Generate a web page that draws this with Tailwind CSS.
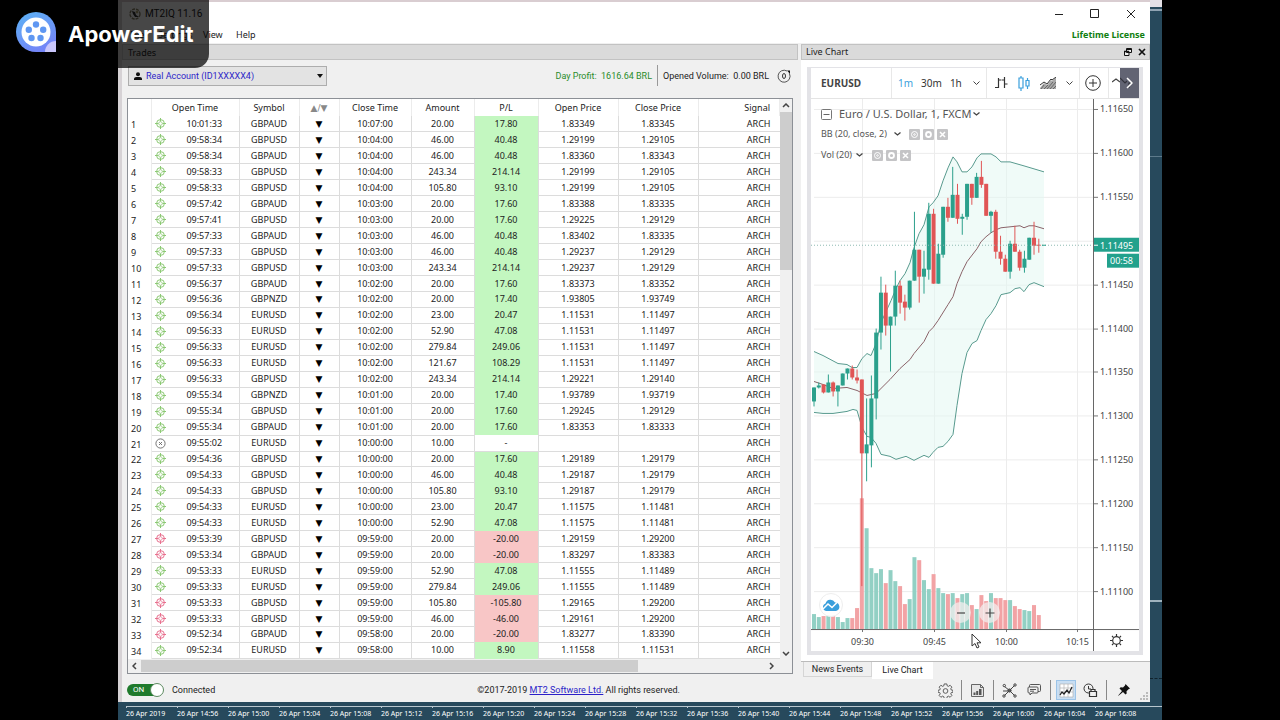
<!DOCTYPE html>
<html lang="en">
<head>
<meta charset="utf-8">
<title>MT2IQ 11.16</title>
<script src="https://cdn.jsdelivr.net/npm/@tailwindcss/browser@4"></script>
</head>
<body class="bg-black font-['Noto_Sans',sans-serif] text-[9px] leading-[12px] text-[#222]">
<div class="relative flex h-screen min-h-[720px] flex-col overflow-hidden px-[118px]">
 <div class="relative flex min-h-0 flex-1 flex-col bg-[#27495c]">

  <!-- desktop behind the window -->
  <div class="absolute top-0 right-0 flex h-full w-3 flex-col">
   <div class="h-[7px] bg-[#e4e0e6]"></div>
   <div class="mt-[2px] h-[2px] bg-[#8fa3b2]"></div>
   <div class="mt-[145px] h-px bg-[#5d7a8b]"></div>
   <div class="mt-[443px] h-[2px] bg-[#9fb3be]"></div>
   <div class="mt-[76px] border-t border-dashed border-[#10222c]"></div>
  </div>

  <!-- application window -->
  <div class="relative mr-3 flex min-h-0 flex-1 flex-col border-t-2 border-l-4 border-t-[#d9cdd1] border-l-[#d6d2d5] bg-[#f0f0f0]">
   <header class="bg-white">
    <div class="flex h-[24px] items-center pl-[7px]">
     <svg class="size-3" viewBox="0 0 12 12"><circle cx="6" cy="6" r="5" fill="none" stroke="#8c8468" stroke-width="1.4" stroke-dasharray="3 1"/><path d="M3 3l3 1 1 3 3 2-4 0-2-3z" fill="#333"/><circle cx="8" cy="4" r="1.4" fill="#b5a878"/></svg>
     <span class="ml-1 font-['Roboto',sans-serif] text-[10px]">MT2IQ 11.16</span>
     <div class="ml-auto flex items-center gap-6 pr-[13px] pb-px">
      <button aria-label="Minimize" class="size-3"><svg viewBox="0 0 12 12"><path d="M2 6.5h8" stroke="#222" /></svg></button>
      <button aria-label="Maximize" class="size-3"><svg viewBox="0 0 12 12"><path d="M1.5 1.5h8v8h-8z" fill="none" stroke="#222"/></svg></button>
      <button aria-label="Close" class="size-3"><svg viewBox="0 0 12 12"><path d="M2 2l8 8M10 2l-8 8" stroke="#222"/></svg></button>
     </div>
    </div>
    <nav class="flex h-[17px] items-center text-[9px]">
     <button class="w-9 pl-2 text-left">File</button>
     <button class="w-[45px] text-left">Settings</button>
     <button class="w-[33px] text-left">View</button>
     <button>Help</button>
     <span class="mr-[5px] ml-auto text-[9px] font-bold text-[#108010]">Lifetime License</span>
    </nav>
   </header>

   <div class="flex min-h-0 flex-1">
    <!-- trades -->
    <section class="flex min-w-0 flex-1 flex-col pt-px">
     <h2 class="h-4 border border-[#c2c2c2] bg-[#dadada] pl-[5px] leading-[15px]">Trades</h2>
     <div class="mt-[5px] flex h-[21px] items-center pr-[7px] pl-[6px] font-['Roboto',sans-serif]">
      <div class="relative">
       <select aria-label="Account" class="block h-[20px] w-[199px] appearance-none border border-[#adadad] bg-[#e3e3e3] pl-[17px] leading-[12px] text-[#2c1fc8]"><option>Real Account (ID1XXXXX4)</option></select>
       <svg class="pointer-events-none absolute top-[6px] left-[6px] size-2" viewBox="0 0 8 8"><circle cx="4" cy="2.3" r="2" fill="#111"/><path d="M0 8V6.6C0 5.4 2 5 4 5s4 .4 4 1.600V8z" fill="#111"/></svg>
       <svg class="pointer-events-none absolute top-[8px] right-[4px] h-1 w-[6px]" viewBox="0 0 6 4"><path d="M0 0h6L3 4z" fill="#111"/></svg>
      </div>
      <span class="ml-auto text-[#2a8c2a]">Day Profit:&nbsp; 1616.64 BRL</span>
      <span class="mx-[5px] h-[21px] w-px bg-[#999]"></span>
      <span>Opened Volume:&nbsp; 0.00 BRL</span>
      <svg class="ml-2 size-[14px] shrink-0" viewBox="0 0 14 14"><path d="M12.400 4.500A6 6 0 1 1 10 2" fill="none" stroke="#555" stroke-width="1"/><ellipse cx="7" cy="7" rx="1.500" ry="2.500" fill="none" stroke="#333"/><path d="M10 1.500h3v3.500z" fill="#111"/></svg>
     </div>

     <div class="mt-[12px] mr-[5px] mb-[4px] ml-[5px] flex min-h-0 flex-1 flex-col border border-[#8c9096] bg-white">
      <div class="flex min-h-0 flex-1">
       <table class="h-full flex-1 table-fixed border-collapse text-center leading-[14px]">
        <colgroup>
         <col class="w-[23px]"><col class="w-[19px]"><col class="w-[69px]"><col class="w-[60px]"><col class="w-[40px]"><col class="w-[72px]"><col class="w-[63px]"><col class="w-[64px]"><col class="w-[80px]"><col class="w-[80px]"><col>
        </colgroup>
        <thead>
         <tr class="h-[17px] [&>th]:border-r [&>th]:border-[#ececec] [&>th]:p-0 [&>th]:font-normal">
          <th></th><th colspan="2">Open Time</th><th>Symbol</th><th class="text-[#888] font-['DejaVu_Sans',sans-serif]">▲/▼</th><th>Close Time</th><th>Amount</th><th>P/L</th><th>Open Price</th><th>Close Price</th><th><div class="pr-[9px] text-right">Signal</div></th>
         </tr>
        </thead>
        <tbody id="rows"></tbody>
       </table>
       <div class="flex w-[12px] flex-col items-center bg-[#f0f0f0]">
        <svg class="my-[4px] h-[5px] w-2" viewBox="0 0 8 5"><path d="M1 4l3-3 3 3" fill="none" stroke="#444" stroke-width="1.500"/></svg>
        <div class="h-[158px] w-full bg-[#cdcdcd]"></div>
        <svg class="mt-auto mb-[3px] h-[5px] w-2" viewBox="0 0 8 5"><path d="M1 1l3 3 3-3" fill="none" stroke="#444" stroke-width="1.500"/></svg>
       </div>
      </div>
      <div class="flex h-[14px] items-center bg-[#f0f0f0] pr-[18px]">
       <svg class="mx-[4px] h-2 w-[5px]" viewBox="0 0 5 8"><path d="M4 1L1 4l3 3" fill="none" stroke="#444" stroke-width="1.500"/></svg>
       <div class="h-[12px] w-[77%] bg-[#cdcdcd]"></div>
       <svg class="ml-auto h-2 w-[5px]" viewBox="0 0 5 8"><path d="M1 1l3 3-3 3" fill="none" stroke="#444" stroke-width="1.500"/></svg>
      </div>
     </div>
    </section>

    <!-- live chart -->
    <section class="ml-[3px] flex w-[349px] flex-col pt-px">
     <h2 class="flex h-4 items-center gap-[6px] border border-[#c2c2c2] bg-[#dadada] pr-[3px] pl-1 leading-[14px]"><span class="mr-auto">Live Chart</span>
      <svg class="size-2" viewBox="0 0 8 8"><path d="M2.500.500h5v4h-5zM2.500 1.500h5M.500 3.500h4.500v4h-4.500z" fill="#eee" stroke="#111"/><path d="M0 3.500h5" stroke="#111" stroke-width="1.500"/></svg>
      <svg class="size-2" viewBox="0 0 8 8"><path d="M1 1l6 6M7 1l-6 6" stroke="#111" stroke-width="1.700"/></svg>
     </h2>
     <div class="flex min-h-0 flex-1 flex-col bg-white pt-[7px] pr-[7px] pb-[6px] pl-[6px]">
      <div class="flex min-h-0 flex-1 flex-col border-4 border-t border-[#e3e3e7] bg-white">
       <div class="flex h-[31px] items-stretch border-b border-[#e4e4e4] text-[10px] text-[#333]">
        <span class="flex w-[81px] items-center border-r border-[#e8e8e8] pl-[10px] font-bold text-[#444]">EURUSD</span>
        <div class="flex w-[95px] items-center gap-[8px] border-r border-[#e8e8e8] pl-[6px]">
         <button class="text-[#3a9fdc]">1m</button><button>30m</button><button>1h</button>
         <svg class="ml-[3px] h-[4px] w-[7px]" viewBox="0 0 7 4"><path d="M.500.500l3 3 3-3" fill="none" stroke="#444"/></svg>
        </div>
        <div class="flex w-[93px] items-center gap-[10px] border-r border-[#e8e8e8] pl-2">
         <svg class="h-[14px] w-[13px]" viewBox="0 0 13 14"><path d="M3.500 2v10M0 11.500h3.500M3.500 4h3M9.500 1v11M9.500 8h3M7 4h2.500" fill="none" stroke="#333" stroke-width="1.200"/></svg>
         <svg class="h-[15px] w-[12px]" viewBox="0 0 12 15"><path d="M3 0v2M3 12v3M1 2h4v10H1zM9.500 2v2.500M9.500 10v3M8 4.500h3v5.500H8z" fill="none" stroke="#3a9fdc" stroke-width="1.200"/></svg>
         <svg class="h-3 w-4" viewBox="0 0 16 12"><path d="M0 11L4 6l3 2 4-5 1 1 4-4v12H0z" fill="#aaa"/><path d="M0 8l4-3 3 2 4-5 1 1 4-3" fill="none" stroke="#333"/><path d="M1 12l3-4M4 12l4-4M7 12l6-7M10 12l6-7M13 12l3-3" fill="none" stroke="#555" stroke-width=".800"/></svg>
         <svg class="h-[4px] w-[7px]" viewBox="0 0 7 4"><path d="M.500.500l3 3 3-3" fill="none" stroke="#444"/></svg>
        </div>
        <button aria-label="Compare" class="flex w-[29px] items-center border-r border-[#e8e8e8] pl-[5px]"><svg class="size-4" viewBox="0 0 16 16"><circle cx="8" cy="8" r="7.300" fill="none" stroke="#333"/><path d="M8 4v8M4 8h8" stroke="#333"/></svg></button>
        <svg class="my-auto ml-auto h-[14px] w-2" viewBox="0 0 8 14"><path d="M0 6l4-3 4 3" fill="none" stroke="#444" stroke-width="1.200"/></svg>
        <button aria-label="Scroll toolbar" class="relative flex w-[19px] items-center justify-center bg-[#626473]"><svg class="absolute top-[9px] left-0 h-[12px] w-[14px]" viewBox="0 0 14 12"><path d="M0 1l5 5 2-2M9 11V6h4" fill="none" stroke="#33343d" stroke-width="1.200"/></svg><svg class="relative h-3 w-[8px]" viewBox="0 0 8 12"><path d="M1 1l5 5-5 5" fill="none" stroke="#fff" stroke-width="1.500"/></svg></button>
       </div>
       <div class="relative min-h-0 flex-1 text-[#555]">
        <svg id="chart" class="absolute inset-0 size-full" viewBox="811 98 328 553" preserveAspectRatio="none" font-family="Noto Sans, sans-serif" font-size="9"></svg>
        <div class="absolute top-[7px] left-[10px] flex flex-col">
         <div class="flex h-4 items-center text-[11px]">
          <svg class="mr-[7px] size-[11px]" viewBox="0 0 11 11"><rect x=".500" y=".500" width="10" height="10" rx="1" fill="none" stroke="#777"/><path d="M2.500 5.500h6" stroke="#666"/></svg>
          <span class="mr-[14px]">Euro / U.S. Dollar, 1, FXCM</span>
          <svg class="-ml-[12px] h-[4px] w-[7px]" viewBox="0 0 7 4"><path d="M.500.500l3 2.500 3-2.500" fill="none" stroke="#444" stroke-width="1.300"/></svg>
         </div>
         <div class="legend mt-[4px] flex h-4 items-center gap-[3px]"><span class="mr-1">BB (20, close, 2)</span><svg class="mr-[5px] h-[4px] w-[7px]" viewBox="0 0 7 4"><path d="M.500.500l3 2.500 3-2.500" fill="none" stroke="#444" stroke-width="1.300"/></svg></div>
         <div class="legend mt-[5px] flex h-4 items-center gap-[3px]"><span class="mr-px">Vol (20)</span><svg class="mr-[6px] h-[4px] w-[7px]" viewBox="0 0 7 4"><path d="M.500.500l3 2.500 3-2.500" fill="none" stroke="#444" stroke-width="1.300"/></svg></div>
        </div>
        <span class="absolute bottom-[34px] left-[8px] flex size-6 items-center justify-center rounded-full border border-[#eee] bg-white">
         <svg class="h-[12px] w-[18px]" viewBox="0 0 18 12"><path d="M4 12a4 4 0 0 1-.500-7.600A5.200 5.200 0 0 1 13 3.500 4.300 4.300 0 0 1 14 12z" fill="#3a9fdc"/><path d="M1 10l5-5 4 3.500 5-5" fill="none" stroke="#fff" stroke-width="1.500"/></svg></span>
        <button aria-label="Zoom out" class="absolute bottom-[28px] left-[139px] flex size-[21px] items-center justify-center rounded-full bg-[#f1eeee]/75"><svg class="size-[10px]" viewBox="0 0 10 10"><path d="M1 5h8" stroke="#444" stroke-width="1.200"/></svg></button>
        <button aria-label="Zoom in" class="absolute bottom-[28px] left-[168px] flex size-[21px] items-center justify-center rounded-full bg-[#f1eeee]/75"><svg class="size-[10px]" viewBox="0 0 10 10"><path d="M.500 5h9M5 .500v9" stroke="#444" stroke-width="1.200"/></svg></button>
        <svg class="absolute bottom-[2px] left-[160px] h-[16px] w-[11px]" viewBox="0 0 11 16"><path d="M1 1v12l3-2.500 2 4.500 2-1-2-4.200h4z" fill="#fff" stroke="#333"/></svg>
        <button aria-label="Chart settings" class="absolute right-[16px] bottom-[4px] size-[13px]"><svg viewBox="0 0 13 13" fill="none" stroke="#333" stroke-width="1.200"><circle cx="6.500" cy="6.500" r="3.800"/><path d="M6.500 0v2.500M6.500 10.500V13M0 6.500h2.500M10.500 6.500H13M2 2l1.600 1.600M9.400 9.400L11 11M11 2L9.400 3.600M3.600 9.400L2 11"/></svg></button>
       </div>
      </div>
     </div>
     <div class="flex h-[17px] items-start border-t border-[#bbb] pl-[2px]">
      <button class="h-[15px] w-[69px] border border-t-0 border-[#d5d5d5] font-['Roboto',sans-serif] leading-[14px]">News Events</button>
      <button class="h-[17px] w-[61px] bg-white font-['Roboto',sans-serif] leading-[15px]">Live Chart</button>
     </div>
    </section>
   </div>

   <footer class="flex h-[24px] items-center pr-[2px] pl-[5px] font-['Roboto',sans-serif]">
    <button role="switch" aria-checked="true" aria-label="Connection" class="relative flex h-3 w-[36px] items-center rounded-full bg-[#1f7a2c] pl-[6px] text-[8px] text-white">ON<span class="absolute -top-px -right-px size-[14px] rounded-full border border-[#5d8a60] bg-white"></span></button>
    <span class="ml-[9px]">Connected</span>
    <p class="flex-1 pl-[4px] text-center">©2017-2019 <a href="#" class="text-[#2c1fc8] underline">MT2 Software Ltd.</a> All rights reserved.</p>
    <div class="flex items-center">
     <svg class="size-[15px]" viewBox="0 0 16 16" fill="none" stroke="#555"><path d="M6.600 1h2.800l.4 2 1.300.6 1.800-1.200 1.900 2-1.200 1.700.5 1.300 1.900.4v2l-1.900.5-.5 1.200 1.200 1.800-1.900 1.900-1.800-1.200-1.300.6-.4 1.900H6.600l-.4-1.900-1.300-.6-1.800 1.200-1.900-1.900 1.200-1.800-.5-1.200L0 9.800v-2l1.900-.4.5-1.300-1.200-1.700 1.900-2 1.800 1.200L6.200 3z"/><circle cx="8" cy="8.500" r="2.500"/></svg>
     <span class="mx-2 h-5 w-px bg-[#888]"></span>
     <svg class="size-[15px]" viewBox="0 0 15 15"><path d="M1.500 1.500h9l3 3v9h-12z" fill="#e6e6e6" stroke="#666"/><path d="M10.500 1.500v3h3" fill="none" stroke="#666"/><path d="M3.500 12V9.500h2V12zM6.200 12V8h2v4zM9 12V6h2.500v6z" fill="#555"/></svg>
     <span class="mx-2 h-5 w-px bg-[#888]"></span>
     <svg class="size-[15px]" viewBox="0 0 15 15" fill="none" stroke="#444"><path d="M2.500 3.500l5 4 5-5M7.500 7.500l-5 5M7.500 7.500l5 5M1 8h6"/><circle cx="2.300" cy="2.600" r="1.200"/><circle cx="13" cy="2" r="1.200"/><circle cx="2" cy="13" r="1.200"/><circle cx="13" cy="13" r="1.200"/><circle cx="7.500" cy="7.500" r="1.600" fill="#555"/></svg>
     <svg class="ml-[10px] h-[14px] w-[15px]" viewBox="0 0 15 14" fill="#f0f0f0" stroke="#555"><path d="M3.500 1.500h9q1 0 1 1v5q0 1-1 1h-9q-1 0-1-1v-5q0-1 1-1z"/><path d="M2 4h8q1 0 1 1v4q0 1-1 1H5l-2 2v-2H2q-1 0-1-1V5q0-1 1-1zM3 6.500h6M3 8.200h4"/></svg>
     <span class="mr-[5px] ml-[8px] h-5 w-px bg-[#888]"></span>
     <button aria-label="Live chart" class="flex size-5 items-center justify-center border border-[#9cc4e8] bg-[#c9def2]"><svg class="size-[15px]" viewBox="0 0 15 15"><path d="M1 1h13v13H1zM1 5h13M1 9h13M5 1v13M9 1v13" fill="#fff" stroke="#aaa" stroke-width=".600"/><path d="M1 12l2-3 2 2 3-4 2 3 3-6" fill="none" stroke="#222" stroke-width="1.300"/></svg></button>
     <svg class="ml-[7px] size-[15px]" viewBox="0 0 15 15" fill="#f0f0f0" stroke="#333"><circle cx="5.500" cy="5.500" r="4.500"/><path d="M5.500 3v3h2.500" fill="none"/><path d="M6.500 8.500h7v5h-7zM8 8V6.500h4V8" stroke-width="1.200"/></svg>
     <span class="mr-[11px] ml-[8px] h-5 w-px bg-[#888]"></span>
     <svg class="size-3" viewBox="0 0 12 12" fill="#111"><path d="M7.500 0L12 4.500l-1.500.700-2 2 .2 2.300L7.500 10.500 5 8 .500 11.800.200 11.500 4 7 1.500 4.500 2.700 3.300l2.300.2 2-2z"/></svg>
     <svg class="ml-[10px] mt-3 size-2" viewBox="0 0 8 8" fill="#bbb"><path d="M6 0h2v2H6zM6 3h2v2H6zM6 6h2v2H6zM3 3h2v2H3zM3 6h2v2H3zM0 6h2v2H0z"/></svg>
    </div>
   </footer>
  </div>

  <!-- time ruler of the chart behind -->
  <div class="flex h-[18px] flex-col pt-[4px] pl-2">
   <div class="h-px shrink-0 bg-[#b8c6ce]"></div>
   <div id="ruler" class="flex overflow-hidden whitespace-nowrap text-[7px] leading-[11px] text-white"></div>
  </div>
 </div>

 <!-- video editor watermark -->
 <div class="absolute top-0 left-0 flex h-[68px] w-[209px] items-center rounded-br-[14px] bg-black/72 pb-1 pl-4 text-white">
  <svg class="size-10 shrink-0" viewBox="0 0 40 40"><defs><linearGradient id="g" x1="0" y1="0" x2=".5" y2="1"><stop offset="0" stop-color="#5cb4f5"/><stop offset="1" stop-color="#7385f7"/></linearGradient></defs><path d="M20 0a20 20 0 0 1 20 20v20H20a20 20 0 0 1 0-40z" fill="url(#g)"/><path d="M40 29v11H29a11 11 0 0 1 11-11z" fill="#c9c6fb"/><circle cx="20" cy="20" r="14.500" fill="#fff"/><g fill="#5f97f2"><circle cx="20" cy="12.500" r="3.200"/><circle cx="27.200" cy="17.700" r="3.200"/><circle cx="24.500" cy="26" r="3.200"/><circle cx="15.500" cy="26" r="3.200"/><circle cx="12.800" cy="17.700" r="3.200"/></g></svg>
  <span class="mt-1 ml-[12px] font-['Inter',sans-serif] text-[22px] leading-[28px] font-bold">ApowerEdit</span>
 </div>
</div>

<script>
// open time, symbol, close time, amount, profit, open price, close price
const trades = `10:01:33 GBPAUD 10:07:00 20.00 17.80 1.83349 1.83345
09:58:34 GBPUSD 10:04:00 46.00 40.48 1.29199 1.29105
09:58:34 GBPAUD 10:04:00 46.00 40.48 1.83360 1.83343
09:58:33 GBPUSD 10:04:00 243.34 214.14 1.29199 1.29105
09:58:33 GBPUSD 10:04:00 105.80 93.10 1.29199 1.29105
09:57:42 GBPAUD 10:03:00 20.00 17.60 1.83388 1.83335
09:57:41 GBPUSD 10:03:00 20.00 17.60 1.29225 1.29129
09:57:33 GBPAUD 10:03:00 46.00 40.48 1.83402 1.83335
09:57:33 GBPUSD 10:03:00 46.00 40.48 1.29237 1.29129
09:57:33 GBPUSD 10:03:00 243.34 214.14 1.29237 1.29129
09:56:37 GBPAUD 10:02:00 20.00 17.60 1.83373 1.83352
09:56:36 GBPNZD 10:02:00 20.00 17.40 1.93805 1.93749
09:56:34 EURUSD 10:02:00 23.00 20.47 1.11531 1.11497
09:56:33 EURUSD 10:02:00 52.90 47.08 1.11531 1.11497
09:56:33 EURUSD 10:02:00 279.84 249.06 1.11531 1.11497
09:56:33 EURUSD 10:02:00 121.67 108.29 1.11531 1.11497
09:56:33 GBPUSD 10:02:00 243.34 214.14 1.29221 1.29140
09:55:34 GBPNZD 10:01:00 20.00 17.40 1.93789 1.93719
09:55:34 GBPUSD 10:01:00 20.00 17.60 1.29245 1.29129
09:55:34 GBPAUD 10:01:00 20.00 17.60 1.83353 1.83333
09:55:02 EURUSD 10:00:00 10.00 -
09:54:36 GBPUSD 10:00:00 20.00 17.60 1.29189 1.29179
09:54:33 GBPUSD 10:00:00 46.00 40.48 1.29187 1.29179
09:54:33 GBPUSD 10:00:00 105.80 93.10 1.29187 1.29179
09:54:33 EURUSD 10:00:00 23.00 20.47 1.11575 1.11481
09:54:33 EURUSD 10:00:00 52.90 47.08 1.11575 1.11481
09:53:39 GBPUSD 09:59:00 20.00 -20.00 1.29159 1.29200
09:53:34 GBPAUD 09:59:00 20.00 -20.00 1.83297 1.83383
09:53:33 EURUSD 09:59:00 52.90 47.08 1.11555 1.11489
09:53:33 EURUSD 09:59:00 279.84 249.06 1.11555 1.11489
09:53:33 GBPUSD 09:59:00 105.80 -105.80 1.29165 1.29200
09:53:33 GBPUSD 09:59:00 46.00 -46.00 1.29161 1.29200
09:52:34 GBPAUD 09:58:00 20.00 -20.00 1.83277 1.83390
09:52:34 EURUSD 09:58:00 10.00 8.90 1.11558 1.11531`.split('\n').map(l => l.split(' '));

const target = c => `<svg class="mx-auto block size-[11px]" viewBox="0 0 11 11" fill="none" stroke="${c}"><circle cx="5.5" cy="5.5" r="3.9"/><circle cx="5.5" cy="5.5" r="1.8" stroke-width=".7"/><path d="M5.500 0v3.500M5.500 7.500V11M0 5.500h3.500M7.500 5.500H11"/></svg>`;
const voided = `<svg class="mx-auto block size-[11px]" viewBox="0 0 11 11" fill="none" stroke="#666" stroke-width=".9"><circle cx="5.5" cy="5.5" r="4.6"/><path d="M4 4l3 3M7 4L4 7"/></svg>`;
const cell = 'border-r border-b border-[#dcdcdc] p-0';
document.getElementById('rows').innerHTML = trades.map((t, i) => {
  const [open, sym, close, amount, pl, op = '', cp = ''] = t;
  const kind = pl === '-' ? 'none' : pl[0] === '-' ? 'loss' : 'win';
  const bg = { none: 'border-r border-b border-[#dcdcdc] p-0', loss: 'border-r border-[#dcdcdc] bg-[#f8c6c6] p-0', win: 'border-r border-[#dcdcdc] bg-[#c3f7c0] p-0' }[kind];
  const icon = { none: voided, loss: target('#e8718f'), win: target('#8cc974') }[kind];
  return `<tr><th class="border-r border-[#ececec] p-0 pt-[3px] pl-[3px] text-left leading-[12px] font-normal">${i + 1}</th><td class="border-b border-[#dcdcdc] p-0">${icon}</td><td class="${cell}">${open}</td><td class="${cell}">${sym}</td><td class="${cell} font-['DejaVu_Sans',sans-serif] text-[9px] text-black">▼</td><td class="${cell}">${close}</td><td class="${cell}">${amount}</td><td class="${bg}">${pl}</td><td class="${cell}">${op}</td><td class="${cell}">${cp}</td><td class="border-b border-[#dcdcdc] p-0 pr-[9px] text-right">ARCH</td></tr>`;
}).join('');

document.getElementById('ruler').innerHTML = ['2019', '14:56', '15:00', '15:04', '15:08', '15:12', '15:16', '15:20', '15:24', '15:28', '15:32', '15:36', '15:40', '15:44', '15:48', '15:52', '15:56', '16:00', '16:04', '16:08']
  .map(t => `<span class="w-[51px] shrink-0"><i class="block h-px w-px bg-[#b8c6ce]"></i>26 Apr ${t}</span>`).join('');

document.querySelectorAll('.legend').forEach(el => {
  const marks = ['<circle cx="5.5" cy="5.5" r="3"/><circle cx="5.5" cy="5.5" r=".8"/>', '<circle cx="5.5" cy="5.5" r="2.5" stroke-width="1.800"/>', '<path d="M3 3l5 5M8 3l-5 5" stroke-width="1.500"/>'];
  el.insertAdjacentHTML('beforeend', marks.map(m => `<svg class="size-[11px]" viewBox="0 0 11 11" fill="none" stroke="#fff"><rect width="11" height="11" rx="1" fill="#c4c4c6" stroke="none"/>${m}</svg>`).join(''));
});

// colour, body top, body bottom, wick top, wick bottom, volume top
const G = '#2ba08c', R = '#e05555';
const candles = [[G,387,401,387,406,614],[G,385,387,382,388,617],[R,384,392,384,393,616],[G,382,392,374,392,615],[R,382,391,381,396,616],[G,385,391,385,406,617],[G,373,385,373,385,622],[G,368,373,368,379,618],[R,368,377,365,379,618],[R,377,380,369,383,608],[R,379,453,379,586,498],[G,444,453,398,481,528],[G,398,445,375,467,568],[G,332,398,328,419,573],[G,292,332,276,349,569],[R,292,325,284,335,583],[G,316,325,316,371,570],[G,285,316,270,325,581],[R,285,302,280,313,586],[R,301,307,294,320,604],[G,280,307,280,309,599],[G,249,280,211,280,557],[R,249,276,249,302,560],[G,268,276,250,293,580],[G,213,269,202,279,589],[R,213,283,208,283,574],[G,253,283,243,283,588],[G,206,254,206,257,593],[R,206,217,197,221,594],[G,194,217,166,217,593],[R,194,218,183,223,598],[G,216,218,213,234,594],[G,183,216,183,219,593],[R,183,197,183,204,605],[G,176,197,172,197,609],[R,176,184,160,187,595],[R,183,215,183,215,601],[G,211,215,210,232,593],[R,211,251,209,258,598],[R,251,258,235,264,598],[R,258,271,254,271,600],[G,243,271,240,278,600],[R,243,251,225,251,606],[R,251,267,249,270,609],[G,258,267,250,272,610],[G,237,259,237,259,611],[R,237,245,221,254,605],[R,244,245,238,252,615]];
const up = '814,351 823,355 838,363 847,364 852,367 857,367 862,358 867,353 871,355 876,343 881,322 886,311 891,300 896,288 900,280 905,273 910,262 914,247 919,233 924,224 929,206 933,202 938,195 943,180 948,167 953,156 957,161 962,171 967,171 972,166 977,157 981,153 986,153 991,153 996,156 1001,161 1010,161 1024,165 1034,168 1044,171';
const mid = '814,381 823,384 833,388 847,387 857,390 867,395 876,393 890,379 900,368 910,359 914,353 924,341 929,331 933,327 938,320 948,304 953,296 957,283 962,271 967,261 977,248 981,241 986,236 991,232 996,229 1001,227 1020,225 1024,227 1029,225 1034,225 1044,228';
const low = '814,412 823,413 833,413 847,411 853,409 857,410 862,427 867,436 871,437 876,443 881,454 890,456 896,459 906,456 914,460 924,455 929,457 933,452 938,447 943,446 948,441 953,434 957,405 962,373 967,352 972,343 977,340 981,330 986,319 991,313 996,305 1001,294 1010,292 1015,288 1020,287 1024,291 1029,284 1034,282 1039,284 1044,286';
const x = k => 814 + k * 4.783;
let s = '';
const prices = ['1.11650','1.11600','1.11550','','1.11450','1.11400','1.11350','1.11300','1.11250','1.11200','1.11150','1.11100'];
prices.forEach((p, i) => {
  const y = Math.round(108 + i * 43.9) + .5;
  s += `<path d="M814 ${y}H1094" stroke="#ececec"/><path d="M1094 ${y}h4" stroke="#777"/><text x="1100" y="${y + 3}" fill="#444">${p}</text>`;
});
[['09:30', 862.5], ['09:45', 934.5], ['10:00', 1006.5], ['10:15', 1077.5]].forEach(([t, vx]) => {
  s += `<path d="M${vx} 98V629" stroke="#ececec"/><path d="M${vx} 629v3" stroke="#777"/><text x="${vx}" y="645" text-anchor="middle" fill="#444">${t}</text>`;
});
s += `<polygon points="${up} ${low.split(' ').reverse().join(' ')}" fill="#e2f7f2" fill-opacity=".5"/>`;
candles.forEach(([c,,,,, v], k) => { s += `<rect x="${x(k) - 2}" y="${v}" width="4" height="${629 - v}" fill="${c === G ? '#92d0c4' : '#f2a3a5'}"/>`; });
s += `<polyline points="${up}" fill="none" stroke="#579a8e"/><polyline points="${low}" fill="none" stroke="#579a8e"/><polyline points="${mid}" fill="none" stroke="#8a6268"/>`;
candles.forEach(([c, a, b, h, l], k) => { s += `<path d="M${x(k)} ${h}V${l}" stroke="${c}"/><rect x="${x(k) - 2}" y="${a}" width="4" height="${b - a}" fill="${c}"/>`; });
s += `<path d="M811 244.500H1094" stroke="#8fbab2" stroke-dasharray="1 2"/><path d="M1042 244.500h4" stroke="${G}"/>`;
s += `<path d="M1093.500 98V651M811 629.500H1139" stroke="#666" fill="none"/>`;
s += `<rect x="1094" y="237" width="45" height="14" fill="#22a18c"/><path d="M1094 244.500h4" stroke="#fff"/><text x="1100" y="248" fill="#fff">1.11495</text><rect x="1107" y="253" width="32" height="14" fill="#22a18c"/><text x="1110" y="263" fill="#fff">00:58</text>`;
document.getElementById('chart').innerHTML = s;
</script>
</body>
</html>
